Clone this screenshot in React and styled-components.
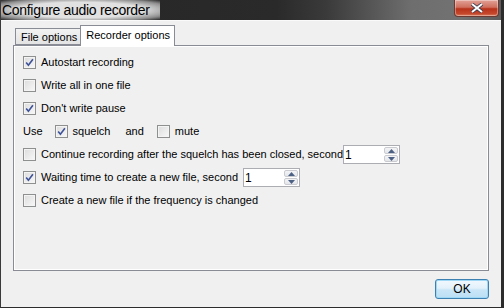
import styled, { createGlobalStyle } from "styled-components";

const GlobalStyle = createGlobalStyle`
  html, body { margin: 0; padding: 0; background: #1e1e1e; }
  body { font-family: "Liberation Sans", Arial, sans-serif; font-size: 11px; }
`;

function Check({ checked }) {
  return (
    <Box>
      {checked && (
        <svg width="9" height="9" viewBox="0 0 9 9">
          <path d="M1.2 4.6 L3.4 7.3 L7.9 1.2" fill="none" stroke="#3d5299" strokeWidth="1.6" />
        </svg>
      )}
    </Box>
  );
}

function CheckRow({ checked, label, children }) {
  return (
    <Row>
      <Check checked={checked} />
      <Label>{label}</Label>
      {children}
    </Row>
  );
}

function Spin({ value }) {
  return (
    <SpinBox>
      <SpinValue>{value}</SpinValue>
      <SpinButtons>
        <SpinBtn>
          <svg width="7" height="4" viewBox="0 0 7 4"><path d="M0 4 L3.5 0 L7 4Z" fill="#4d6185" /></svg>
        </SpinBtn>
        <SpinBtn>
          <svg width="7" height="4" viewBox="0 0 7 4"><path d="M0 0 L3.5 4 L7 0Z" fill="#4d6185" /></svg>
        </SpinBtn>
      </SpinButtons>
    </SpinBox>
  );
}

export default function App() {
  return (
    <>
      <GlobalStyle />
      <Window>
        <TitleBar>
          <Title>Configure audio recorder</Title>
          <CloseButton>
            <svg width="14" height="10" viewBox="0 0 14 10">
              <path d="M2 1 L12 9 M12 1 L2 9" stroke="#3c3c50" strokeWidth="3.6" />
              <path d="M2 1 L12 9 M12 1 L2 9" stroke="#fff" strokeWidth="2" />
            </svg>
          </CloseButton>
        </TitleBar>
        <Body>
          <Tabs>
            <Tab>File options</Tab>
            <Tab selected>Recorder options</Tab>
          </Tabs>
          <Panel>
            <CheckRow checked label="Autostart recording" />
            <CheckRow label="Write all in one file" />
            <CheckRow checked label="Don't write pause" />
            <Row>
              <Label>Use</Label>
              <Gap w={12} />
              <Check checked />
              <Label>squelch</Label>
              <Gap w={15} />
              <Label>and</Label>
              <Gap w={13} />
              <Check />
              <Label>mute</Label>
            </Row>
            <CheckRow label="Continue recording after the squelch has been closed, second">
              <Spin value="1" />
            </CheckRow>
            <CheckRow checked label="Waiting time to create a new file, second">
              <Gap w={5} />
              <Spin value="1" />
            </CheckRow>
            <CheckRow label="Create a new file if the frequency is changed" />
          </Panel>
          <Footer>
            <OkButton>OK</OkButton>
          </Footer>
        </Body>
      </Window>
    </>
  );
}

const Window = styled.div`
  width: 504px;
  height: 308px;
  box-sizing: border-box;
  display: flex;
  flex-direction: column;
  background: #2a2a2a;
  border-left: 1px solid #3a3a3a;
  border-right: 3px solid #2c2c2c;
  border-bottom: 1px solid #2c2c2c;
`;

const TitleBar = styled.div`
  height: 20px;
  display: flex;
  align-items: flex-start;
  justify-content: space-between;
  background: linear-gradient(to right, #262626 0%, #2a2a2a 55%, #3a3a3a 65%, #6e6e6e 82%, #727272 92%, #5c5c5c 100%);
`;

const Title = styled.div`
  font-family: "Liberation Sans", Arial, sans-serif;
  font-size: 14px;
  letter-spacing: -0.3px;
  line-height: 20px;
  padding: 0 10px 0 1px;
  color: #000;
  background: radial-gradient(ellipse at center, rgba(235, 235, 235, 0.95) 55%, rgba(210, 210, 210, 0.6) 82%, rgba(200, 200, 200, 0) 100%);
`;

const CloseButton = styled.div`
  width: 45px;
  height: 17px;
  margin-right: 2px;
  box-sizing: border-box;
  display: flex;
  align-items: center;
  justify-content: center;
  border: 1px solid #6b3a33;
  border-top: none;
  border-radius: 0 0 4px 4px;
  background: linear-gradient(to bottom, #e2a196 0%, #d0705f 45%, #b8321a 55%, #c4472c 85%, #d87a5c 100%);
  box-shadow: inset 0 0 0 1px rgba(255, 255, 255, 0.35);
`;

const Body = styled.div`
  flex: 1;
  display: flex;
  flex-direction: column;
  background: #f0f0f0;
  border-top: 1px solid #fafafa;
  padding: 4px 12px 0 12px;
`;

const Tabs = styled.div`
  display: flex;
  align-items: flex-end;
  height: 20px;
  padding-left: 2px;
  position: relative;
  z-index: 1;
`;

const Tab = styled.div`
  box-sizing: border-box;
  height: ${(p) => (p.selected ? "21px" : "17px")};
  margin-bottom: ${(p) => (p.selected ? "-1px" : "0")};
  padding: ${(p) => (p.selected ? "2px 4px 0 5px" : "1px 3px 0 5px")};
  border: 1px solid #898c95;
  border-bottom: ${(p) => (p.selected ? "none" : "1px solid #898c95")};
  border-right: ${(p) => (p.selected ? "1px solid #898c95" : "none")};
  background: ${(p) => (p.selected ? "#fff" : "linear-gradient(to bottom, #f2f2f2, #e3e3e3)")};
  line-height: 15px;
  color: #000;
  white-space: nowrap;
`;

const Panel = styled.div`
  height: 226px;
  box-sizing: border-box;
  border: 1px solid #898c95;
  box-shadow: inset 1px 1px 0 #fff, inset -1px -1px 0 #fff;
  background: #f0f0f0;
  padding: 5px 0 0 9px;
  display: flex;
  flex-direction: column;
`;

const Row = styled.div`
  height: 23px;
  flex: none;
  display: flex;
  align-items: center;
`;

const Box = styled.div`
  width: 13px;
  height: 13px;
  box-sizing: border-box;
  flex: none;
  border: 1px solid #8e8f8f;
  background: linear-gradient(135deg, #dcdcdc, #f8f8f8);
  box-shadow: inset 0 0 0 1px #f4f4f4;
  display: flex;
  align-items: center;
  justify-content: center;
  margin-right: 5px;
`;

const Label = styled.span`
  color: #000;
  white-space: nowrap;
  line-height: 13px;
`;

const Gap = styled.span`
  width: ${(p) => p.w}px;
  flex: none;
`;

const SpinBox = styled.div`
  width: 57px;
  height: 19px;
  box-sizing: border-box;
  flex: none;
  border: 1px solid #abadb3;
  background: #fff;
  display: flex;
  align-items: center;
  justify-content: space-between;
  padding: 0 1px 0 1px;
`;

const SpinValue = styled.span`
  font-size: 12px;
  color: #000;
`;

const SpinButtons = styled.div`
  display: flex;
  flex-direction: column;
  gap: 1px;
`;

const SpinBtn = styled.div`
  width: 14px;
  height: 7px;
  box-sizing: border-box;
  border: 1px solid #c9cbd1;
  border-radius: 2px;
  background: linear-gradient(to bottom, #f4f4f6, #e4e6ea);
  display: flex;
  align-items: center;
  justify-content: center;
`;

const Footer = styled.div`
  flex: 1;
  display: flex;
  justify-content: flex-end;
  align-items: flex-start;
  padding-top: 8px;
`;

const OkButton = styled.div`
  width: 54px;
  height: 20px;
  box-sizing: border-box;
  border: 1px solid #3c7fb1;
  border-radius: 3px;
  background: linear-gradient(to bottom, #f1f8fd 0%, #e3f1fb 45%, #c9e5f7 55%, #bcdff4 100%);
  box-shadow: inset 0 0 0 1px #9ed8f5;
  display: flex;
  align-items: center;
  justify-content: center;
  font-size: 12px;
  color: #000;
`;
